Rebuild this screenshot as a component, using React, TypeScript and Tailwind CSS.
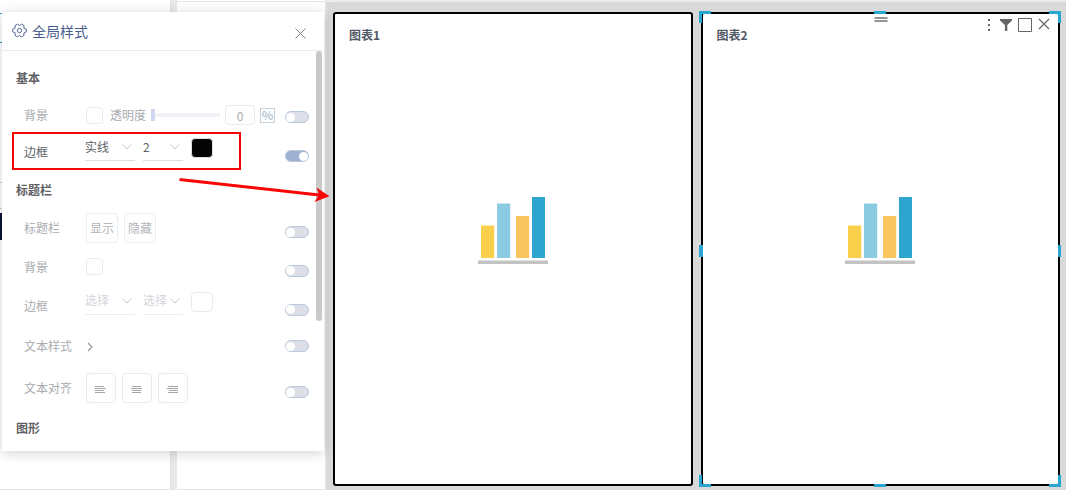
import { useState, type ReactNode } from 'react';
import clsx from 'clsx';

function Toggle({ label, on = false, className }: { label: string; on?: boolean; className?: string }) {
  const [checked, setChecked] = useState(on);

  return (
    <input
      type="checkbox"
      role="switch"
      aria-label={label}
      checked={checked}
      onChange={() => setChecked(!checked)}
      className={clsx(
        'ml-auto flex h-3 w-6 shrink-0 appearance-none items-center rounded-full border border-[#b9c8da] before:size-[9px] before:rounded-full before:bg-white',
        checked ? 'justify-end bg-[#9fb1d3]' : 'justify-start bg-[#dcdfe7]',
        className,
      )}
    />
  );
}

function Row({
  label,
  height = 'h-[39px]',
  active = false,
  toggleClass = 'mt-2',
  children,
}: {
  label: string;
  height?: string;
  active?: boolean;
  toggleClass?: string;
  children?: ReactNode;
}) {
  return (
    <div
      className={clsx(
        'relative flex items-center pr-[15px] pl-[22px]',
        height,
        active ? 'text-[#606266]' : 'text-[#a9abaf]',
      )}
    >
      <span className="w-[62px] shrink-0">{label}</span>
      {children}
      <Toggle label={label} on={active} className={toggleClass} />
    </div>
  );
}

function Heading({ children }: { children: string }) {
  return <h3 className="flex h-[38px] items-center pl-[14px] font-bold text-[#5f6165]">{children}</h3>;
}

function Select({ label, value, width, active = false }: { label: string; value: string; width: string; active?: boolean }) {
  return (
    <div className={clsx('relative', width)}>
      <select
        aria-label={label}
        defaultValue={value}
        className={clsx(
          'h-7 w-full appearance-none border-b bg-transparent outline-none',
          active ? 'border-[#dcdfe6] text-[#606266]' : 'border-[#ebedf0] text-[#d3d5da]',
        )}
      >
        <option>{value}</option>
      </select>
      <svg
        className="pointer-events-none absolute top-[11px] right-[3px] h-[6px] w-[10px]"
        viewBox="0 0 10 6"
        fill="none"
        stroke="#c3c6cc"
      >
        <path d="M.5.5 5 5 9.500.5" />
      </svg>
    </div>
  );
}

function BorderControls({ style, size, swatch, active }: { style: string; size: string; swatch: string; active?: boolean }) {
  return (
    <div className="-ml-px mb-[10px] flex items-center gap-2">
      <Select label="线型" value={style} width="w-[50px]" active={active} />
      <Select label="线宽" value={size} width="w-[40px]" active={active} />
      <button aria-label="边框颜色" className={clsx('mt-[2px] h-5 w-[22px] rounded-sm border', swatch)} />
    </div>
  );
}

const ALIGNS = [
  { label: '左对齐', d: 'M0 .5h9M0 2.500h11M0 4.500h9M0 6.500h10' },
  { label: '居中对齐', d: 'M1 .5h9M0 2.500h11M1 4.500h9M1 6.500h9' },
  { label: '右对齐', d: 'M1 .5h10M0 2.500h11M2 4.500h9M1 6.500h10' },
];

function StylePanel() {
  return (
    <section className="absolute top-3 left-[2px] w-[322px] bg-white pb-1 text-xs shadow-[0_2px_12px_rgba(0,0,0,0.18)]">
      <header className="flex h-[39px] items-center border-b border-[#ebebeb] pr-[18px] pl-[10px] text-[#4a5d8f]">
        <svg className="-mt-px size-[15px]" viewBox="0 0 16 16" fill="none" stroke="currentColor" strokeLinejoin="round">
          <path d="M15.200 6.500v3L12.600 10.600 12.800 13.300 10.200 14.800 8 13.300 5.800 14.800 3.200 13.300 3.400 10.600.8 9.500v-3L3.400 5.400 3.200 2.700 5.800 1.200 8 2.700 10.200 1.200 12.800 2.700 12.600 5.400Z" />
          <circle cx="8" cy="8" r="2.300" />
        </svg>
        <h2 className="ml-[5px] text-sm">全局样式</h2>
        <button aria-label="关闭" className="mt-1 ml-auto">
          <svg className="size-[11px]" viewBox="0 0 11 11" stroke="#808286">
            <path d="M.5.5l10 10M10.500.5l-10 10" />
          </svg>
        </button>
      </header>

      <div className="pt-2">
        <Heading>基本</Heading>
        <Row label="背景" height="h-9" toggleClass="mt-1">
          <button aria-label="背景颜色" className="size-[17px] rounded-sm border border-[#ebebeb]" />
          <label htmlFor="opacity" className="ml-[7px]">
            透明度
          </label>
          <input
            id="opacity"
            type="range"
            defaultValue={0}
            className="ml-[5px] w-[69px] appearance-none bg-transparent [&::-webkit-slider-runnable-track]:h-1 [&::-webkit-slider-runnable-track]:bg-[#f0f2f5] [&::-webkit-slider-thumb]:-mt-1 [&::-webkit-slider-thumb]:h-3 [&::-webkit-slider-thumb]:w-1 [&::-webkit-slider-thumb]:appearance-none [&::-webkit-slider-thumb]:bg-[#ced6f0]"
          />
          <input
            aria-label="透明度数值"
            defaultValue="0"
            className="ml-[5px] h-5 w-[30px] rounded-sm border border-[#ebebeb] text-center"
          />
          <span className="ml-[5px] flex size-[15px] items-center justify-center border border-[#c3d2de] font-bold text-[#b3c6d4]">
            %
          </span>
        </Row>
        <Row label="边框" height="h-[38px]" active>
          <BorderControls style="实线" size="2" swatch="border-[#dcdfe6] bg-[#050505]" active />
          <div className="pointer-events-none absolute -top-px left-[10px] h-[38px] w-[229px] border-2 border-[#f30707]" />
        </Row>

        <Heading>标题栏</Heading>
        <Row label="标题栏" height="h-[38px]">
          <div className="flex gap-[6px]">
            <button className="h-[30px] w-8 rounded-sm border border-[#ebeef5] text-[#b4b6bb]">显示</button>
            <button className="h-[30px] w-8 rounded-sm border border-[#ebeef5] text-[#b4b6bb]">隐藏</button>
          </div>
        </Row>
        <Row label="背景">
          <button aria-label="标题栏背景颜色" className="size-[17px] rounded-sm border border-[#ebebeb]" />
        </Row>
        <Row label="边框">
          <BorderControls style="选择" size="选择" swatch="border-[#ebebeb] bg-white" />
        </Row>
        <Row label="文本样式" height="h-[42px]" toggleClass="">
          <button aria-label="展开文本样式">
            <svg className="mt-[2px] h-[10px] w-[8px]" viewBox="0 0 8 10" fill="none" stroke="#9a9ca0" strokeWidth="1.300">
              <path d="M2 1l4 4-4 4" />
            </svg>
          </button>
        </Row>
        <Row label="文本对齐" height="h-[42px]">
          <div className="flex gap-[6px]">
            {ALIGNS.map((align) => (
              <button
                key={align.label}
                aria-label={align.label}
                className="flex size-[30px] items-center justify-center rounded-sm border border-[#ebebeb]"
              >
                <svg className="mt-[3px] mr-px h-[7px] w-[11px]" viewBox="0 0 11 7" stroke="#a3a5a9">
                  <path d={align.d} />
                </svg>
              </button>
            ))}
          </div>
        </Row>
        <Heading>图形</Heading>
      </div>

      {/* scrollbar thumb */}
      <div className="absolute top-[39px] right-[2px] h-[270px] w-[6px] rounded-full bg-[#c9c9c9]" />

      {/* arrow from the border row to the chart frame */}
      <svg className="pointer-events-none absolute top-[160px] left-[176px] h-[32px] w-[152px]" viewBox="0 0 152 32">
        <path d="M1.500 7.500 141 23" stroke="#f90606" strokeWidth="3" fill="none" />
        <path d="M151.500 24.300 138.500 15.500 141 22.800 136.500 30Z" fill="#f90606" />
      </svg>
    </section>
  );
}

const HANDLES = [
  '-top-[3px] -left-1 size-3 border-t-[3px] border-l-[3px]',
  '-top-[3px] -right-[3px] size-3 border-t-[3px] border-r-[3px]',
  '-bottom-[3px] -left-1 size-3 border-b-[3px] border-l-[3px]',
  '-right-[3px] -bottom-[3px] size-3 border-r-[3px] border-b-[3px]',
  '-top-[3px] left-1/2 h-[3px] w-3 -translate-x-1/2 border-t-[3px]',
  '-bottom-[3px] left-1/2 h-[3px] w-3 -translate-x-1/2 border-b-[3px]',
  'top-1/2 -left-1 h-3 w-1 -translate-y-1 border-l-4',
  'top-1/2 -right-[3px] h-3 w-[3px] -translate-y-1 border-r-[3px]',
];

function ChartCard({ title, selected = false }: { title: string; selected?: boolean }) {
  return (
    <article className="relative flex flex-1 flex-col rounded-[3px] border-2 border-black bg-white">
      <h2 className="px-[14px] pt-3 text-xs leading-[18px] font-bold text-[#515a66]">{title}</h2>
      <div className="flex flex-1 items-center justify-center pb-[68px]">
        <svg className="h-[67px] w-[70px]" viewBox="0 0 70 67">
          <path fill="#f8d04b" d="M3 28.500h13.200V61H3z" />
          <path fill="#8bcbe2" d="M19 6.500h13.200V61H19z" />
          <path fill="#f9c55f" d="M38 19h13.200v42H38z" />
          <path fill="#2da5cf" d="M54 0h13v61H54z" />
          <path fill="#c3c3c3" d="M0 63.500h70V67H0z" />
        </svg>
      </div>

      {selected && (
        <>
          {HANDLES.map((handle) => (
            <span key={handle} className={clsx('absolute border-[#2aa5cf]', handle)} />
          ))}
          <span className="absolute top-[3px] left-1/2 ml-px h-[5px] w-[13px] -translate-x-1/2 border-y-2 border-[#969696]" />
          <div className="absolute top-1 right-2 flex items-center gap-[6px] text-[#666]">
            <button aria-label="更多" className="mr-[3px]">
              <svg className="h-[14px] w-[4px]" viewBox="0 0 4 14" fill="currentColor">
                <path d="M1 1h2v2H1zM1 6h2v2H1zM1 11h2v2H1z" />
              </svg>
            </button>
            <button aria-label="筛选">
              <svg className="h-[14px] w-[12px]" viewBox="0 0 12 14" fill="currentColor">
                <path d="M0 1h12v1.500L7.300 7v6H4.900V7L0 2.500z" />
              </svg>
            </button>
            <button aria-label="最大化">
              <svg className="size-[14px]" viewBox="0 0 14 14" fill="none" stroke="currentColor">
                <path d="M.5.5h13v13H.5z" />
              </svg>
            </button>
            <button aria-label="移除">
              <svg className="h-[14px] w-[12px]" viewBox="0 0 12 14" fill="none" stroke="currentColor" strokeWidth="1.200">
                <path d="M1 1l10 10M11 1l-10 10" />
              </svg>
            </button>
          </div>
        </>
      )}
    </article>
  );
}

export default function App() {
  return (
    <div className="relative flex min-h-screen bg-white font-['Noto_Sans_CJK_SC','Noto_Sans',sans-serif]">
      <div className="flex shrink-0">
        <aside className="w-[170px] border-b border-[#e5e5e5] pt-[13px]">
          <div className="h-[30px] border-y border-[#2aa5cf]" />
          <div className="mt-[139px] h-[27px] border-y border-[#d0d0d0]" />
          <div className="mt-1 h-[27px] bg-[#0b1436]" />
        </aside>
        <div className="w-[7px] border-l border-[#dedede] bg-[#e9e9e9]" />
        <aside className="w-[148px] border-b border-[#e5e5e5] pt-px">
          <div className="border-t border-[#e5e5e5]" />
        </aside>
        <div className="w-[2px] bg-[#e3e3e3]" />
      </div>

      <main className="flex flex-1 gap-2 border-t-2 border-[#ececec] bg-[#d9d9d9] pt-[10px] pr-[6px] pb-1 pl-[6px]">
        <ChartCard title="图表1" />
        <ChartCard title="图表2" selected />
      </main>

      <StylePanel />
    </div>
  );
}
